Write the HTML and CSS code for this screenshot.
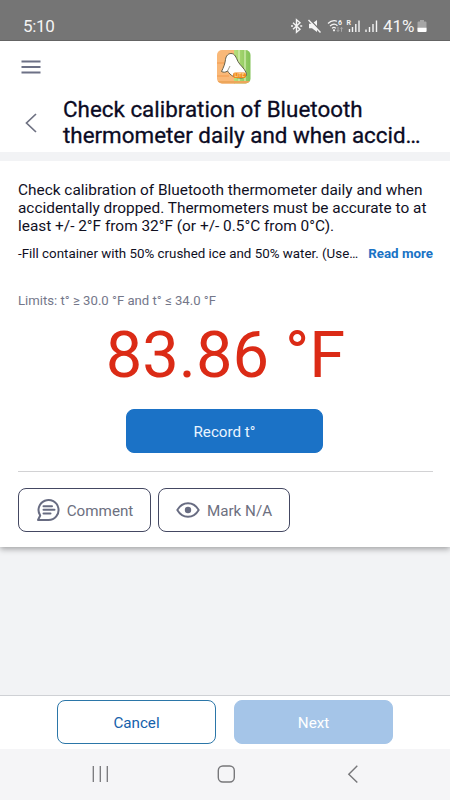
FILE: index.html
```
<!DOCTYPE html>
<html lang="en">
<head>
  <meta charset="utf-8">
  <title>Check calibration</title>
  <meta name="viewport" content="width=device-width, initial-scale=1.0">
  <link rel="stylesheet" href="styles.css">
</head>
<body>
  <div class="status-bar">
    <span class="clock">5:10</span>
    <div class="status-icons">
      <svg class="status-svg" width="94" height="16" viewBox="0 0 94 16" fill="none" stroke="#f4f4f4">
        <!-- Bluetooth -->
        <path d="M3 4.800l7 6.400-3.500 3V1.800l3.500 3-7 6.400" stroke-width="1.400"/>
        <path d="M1 8h2M10.200 8h2" stroke-width="1.600"/>
        <!-- Muted speaker -->
        <path d="M19 5.800h3l5-3.800v12l-5-3.800h-3z" fill="#f4f4f4" stroke="none"/>
        <path d="M19.500 1.300l12 12.500" stroke="#757575" stroke-width="1.500"/>
        <path d="M18.500 2l12 12.500" stroke-width="1.400"/>
        <!-- Wifi -->
        <path d="M38 5.500c3-3 6-3.300 9-2.300M40 8c2.500-2.200 5.500-2.200 7.500-.3M42 10.400c1.300-1.200 2.600-1.200 3.800 0" stroke-width="1.200"/>
        <circle cx="44" cy="12.300" r="1.100" fill="#f4f4f4" stroke="none"/>
        <path d="M48 9v4.500M46.700 12l1.300 1.500 1.300-1.500M51.500 13.800V9.300M50.200 10.700l1.300-1.400 1.300 1.400" stroke="#a8a8a8"/>
        <text x="48" y="7.200" class="status-tiny">6</text>
        <!-- Signal bars -->
        <text x="56.500" y="6.500" class="status-tiny">R</text>
        <path d="M59.500 11v3M62.500 9v5M65.800 6v8M69 2.500v11.500M76 11.500V14M79.500 9v5M83 6v8M86.500 2.500V14" stroke-width="1.400"/>
      </svg>
      <span class="battery-text">41%</span>
      <svg width="10" height="14" viewBox="0 0 10 14">
        <path d="M3 1h4v1.500h1.500q1 0 1 1V12q0 1-1 1h-7q-1 0-1-1V3.500q0-1 1-1H3z" fill="#a6a6a6"/>
        <path d="M.5 8.800h9V12q0 1-1 1h-7q-1 0-1-1z" fill="#fff"/>
      </svg>
    </div>
  </div>

  <header class="header">
    <div class="top-row">
      <svg class="menu-icon" width="20" height="14" viewBox="0 0 20 14" stroke="#6d7186" stroke-width="1.800">
        <path d="M.5 1.500h19M.5 7h19M.5 12.500h19"/>
      </svg>
      <svg class="logo" width="34" height="34" viewBox="0 0 34 34">
        <defs>
          <clipPath id="logo-clip"><rect width="33.500" height="33.500" rx="5"/></clipPath>
          <linearGradient id="green" x1="0" x2="1"><stop offset="0" stop-color="#b9df7c"/><stop offset="1" stop-color="#7fc155"/></linearGradient>
        </defs>
        <g clip-path="url(#logo-clip)">
          <rect width="18" height="34" fill="#f9b878"/>
          <path d="M0 13h9M0 26h12" stroke="#f49a4c" stroke-width="1.200"/>
          <rect x="17" width="17" height="34" fill="url(#green)"/>
          <path d="M22 0v34M28 0v34" stroke="#d5efb2" stroke-width="1.300"/>
          <path d="M0 31h34v3H0z" fill="#eda65b"/>
        </g>
        <path d="M4.500 21.500C6.500 17.500 8 14 8.500 9.500 9 5.500 11.500 3.500 14 3.500c4 0 5 4 7 8 2 4 6.500 6.500 8.500 12 .5 3-2.500 4.500-6 4.500-6 0-10-2.500-13-7-2 1.500-4 1.500-6 .5z" fill="#fff" stroke="#55513d" stroke-width=".9"/>
        <path d="M10.500 21l2.500-5" fill="none" stroke="#77715b" stroke-width=".7"/>
        <rect x="16" y="22.500" width="13" height="5.500" rx="2" fill="#f08a1d"/>
        <text x="17.500" y="27" class="logo-text">LITE</text>
      </svg>
    </div>
    <div class="title-row">
      <svg class="back-icon" width="12" height="20" viewBox="0 0 12 20" fill="none" stroke="#6e7182" stroke-width="1.700">
        <path d="M11 1L1.500 10 11 19"/>
      </svg>
      <h1 class="title">Check calibration of Bluetooth<br>thermometer daily and when accid…</h1>
    </div>
  </header>

  <main class="card">
    <p class="description">Check calibration of Bluetooth thermometer daily and when<br>accidentally dropped. Thermometers must be accurate to at<br>least +/- 2°F from 32°F (or +/- 0.5°C from 0°C).</p>
    <div class="details">
      <span class="details-text">-Fill container with 50% crushed ice and 50% water. (Use…</span>
      <a class="read-more">Read more</a>
    </div>
    <p class="limits">Limits: t° ≥ 30.0 °F and t° ≤ 34.0 °F</p>
    <div class="reading">83.86 °F</div>
    <button class="btn record">Record t°</button>
    <div class="actions">
      <button class="btn action comment">
        <svg width="24" height="24" viewBox="0 0 24 24" fill="none" stroke="#686c82" stroke-width="2">
          <path d="M4.200 17.500A10 10 0 1 1 12.500 22H2l2.200-4.500z" stroke-linejoin="round"/>
          <path d="M7.500 8.200h8.500M7.500 11.800h11M7.500 15.400h7" stroke-linecap="round"/>
        </svg>
        <span>Comment</span>
      </button>
      <button class="btn action mark">
        <svg width="24" height="16" viewBox="0 0 24 16" fill="none" stroke="#686c82" stroke-width="1.900">
          <path d="M1.300 8C6.500-1 17.500-1 22.700 8 17.500 17 6.500 17 1.300 8z" stroke-linejoin="round"/>
          <circle cx="12" cy="8" r="3.200" fill="#686c82" stroke="none"/>
        </svg>
        <span>Mark N/A</span>
      </button>
    </div>
  </main>

  <footer class="footer">
    <button class="btn cancel">Cancel</button>
    <button class="btn next">Next</button>
  </footer>

  <nav class="nav-bar">
    <svg width="18" height="18" viewBox="0 0 18 18" stroke="#77777a" stroke-width="1.300">
      <path d="M2.300 1v16M9.300 1v16M16.300 1v16"/>
    </svg>
    <svg width="18" height="18" viewBox="0 0 18 18" fill="none" stroke="#77777a" stroke-width="1.400">
      <rect x="1.300" y="1" width="16" height="16" rx="4.500"/>
    </svg>
    <svg width="18" height="18" viewBox="0 0 18 18" fill="none" stroke="#77777a" stroke-width="1.400">
      <path d="M14.300.8L5.800 9.200l8.500 8.300"/>
    </svg>
  </nav>
</body>
</html>
```
FILE: styles.css
```
* {
  box-sizing: border-box;
}

body {
  margin: 0;
  height: 800px;
  display: flex;
  flex-direction: column;
  background-color: #f2f3f5;
  color: #10101f;
  font-family: Roboto, sans-serif;
  overflow: hidden;
}

svg {
  display: block;
  flex: none;
}

h1, p {
  margin: 0;
  font-weight: 400;
  white-space: nowrap;
}

.status-bar {
  height: 41px;
  display: flex;
  justify-content: space-between;
  padding: 12px 23px 0 23px;
  background-color: #757575;
  border-bottom: 1px solid #646464;
  color: #f4f4f4;
}

.clock {
  font-size: 17px;
  line-height: 29px;
  letter-spacing: -0.3px;
}

.status-icons {
  display: flex;
  align-items: center;
  height: 28px;
}

.status-tiny {
  font-size: 7px;
  font-weight: 700;
  fill: #f4f4f4;
  stroke: none;
}

.battery-text {
  width: 33px;
  margin-left: -1px;
  margin-right: 1px;
  font-size: 17px;
}

.header {
  height: 120px;
  background-color: #fff;
  border-bottom: 9px solid #f2f3f5;
}

.top-row {
  display: flex;
  align-items: center;
  height: 52px;
  padding-left: 21px;
}

.logo {
  margin-left: 176px;
}

.logo-text {
  font-size: 5px;
  font-weight: 700;
  fill: #fbd08b;
}

.title-row {
  display: flex;
  align-items: center;
  height: 60px;
  padding-left: 25px;
}

.title {
  margin-left: 26px;
  padding-bottom: 3px;
  font-size: 22.4px;
  line-height: 26px;
  color: #0b0b24;
  -webkit-text-stroke: 0.3px #0b0b24;
}

.card {
  height: 386px;
  padding: 20px 17px 0 18px;
  background-color: #fff;
  box-shadow: 0 2px 6px rgba(0, 0, 0, 0.35);
  clip-path: inset(0 0 -12px 0);
}

.description {
  font-size: 15.4px;
  line-height: 18px;
}

.details {
  display: flex;
  justify-content: space-between;
  margin-top: 10px;
  font-size: 13.35px;
  line-height: 18px;
  white-space: nowrap;
}

.read-more {
  color: #1a73c5;
  font-weight: 700;
}

.limits {
  margin-top: 29px;
  font-size: 13.15px;
  line-height: 17px;
  color: #74778a;
}

.reading {
  height: 93px;
  font-size: 65px;
  line-height: 93px;
  text-align: center;
  color: #db2b16;
}

.btn {
  display: flex;
  align-items: center;
  justify-content: center;
  height: 44px;
  padding: 2px 0 0;
  border: 1px solid #1b72c6;
  border-radius: 8px;
  background-color: #fff;
  font-family: inherit;
  font-size: 15.2px;
}

.record {
  width: 197px;
  margin: 7px auto 0 108px;
  background-color: #1b72c6;
  color: #e9f4ff;
}

.actions {
  display: flex;
  gap: 7px;
  margin-top: 18px;
  padding-top: 16px;
  border-top: 1px solid #d2d2d4;
}

.action {
  gap: 7px;
  border-color: #444862;
  color: #6d7080;
}

.action svg {
  margin-top: -2px;
}

.comment {
  width: 133px;
}

.mark {
  width: 132px;
}

.footer {
  display: flex;
  gap: 18px;
  height: 54px;
  margin-top: auto;
  padding: 4px 57px 0;
  background-color: #fff;
  border-top: 1px solid #cfd1d5;
}

.cancel, .next {
  width: 159px;
}

.cancel {
  border-color: #2b76a8;
  color: #1561ab;
}

.next {
  border-color: #a5c5e8;
  background-color: #a5c5e8;
  color: #fff;
}

.nav-bar {
  display: flex;
  gap: 108px;
  height: 51px;
  padding: 16px 0 0 91px;
  background-color: #f5f5f7;
}
```
